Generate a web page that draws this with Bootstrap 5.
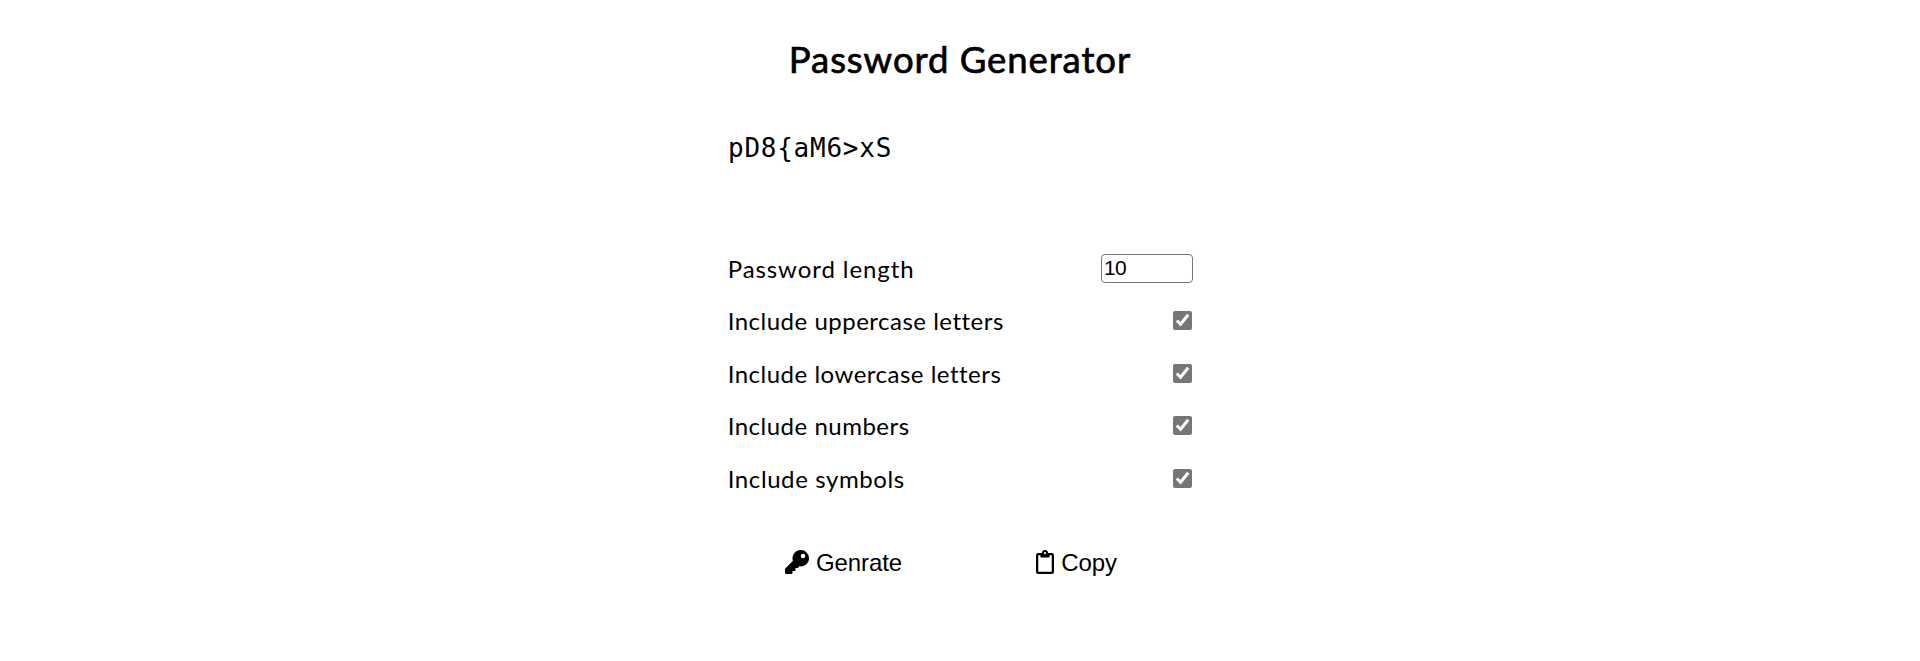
<!DOCTYPE html>
<html lang="en">
<head>
<meta charset="utf-8">
<meta name="viewport" content="width=device-width, initial-scale=1">
<title>Password Generator</title>
<link href="https://cdn.jsdelivr.net/npm/bootstrap@5.3.0/dist/css/bootstrap.min.css" rel="stylesheet">
<style>
body { font-family: Lato, sans-serif; color: #000; background: #fff; }
.generator { width: 466px; padding-top: 35px; }
.title { font-size: 36.5px; line-height: 48px; font-weight: 400; -webkit-text-stroke: .7px #000; letter-spacing: .92px; margin-bottom: 41px; }
.result { font: 26px/48px "DejaVu Sans Mono", monospace; letter-spacing: .75px; height: 118.8px; padding-left: 1px; }
.option { height: 52.5px; font-size: 24px; line-height: 52.5px; letter-spacing: .5px; padding-left: .7px; }
.option-length { letter-spacing: .92px; }
.option-symbols { letter-spacing: .6px; }
.length-box { width: 92px; height: 29px; margin-top: -2px; padding: 0 2px 1px; border: 1px solid #767676; border-radius: 4px; font: 21px/24px "Liberation Sans", sans-serif; letter-spacing: -.6px; color: #000; }
.check { width: 19px; height: 19px; margin: 0 1px 2px 0; accent-color: #767676; }
.actions { margin-top: 42.2px; }
.action { font: 24px/32px "Liberation Sans", sans-serif; letter-spacing: -.1px; background: none; border: 0; padding: 0; color: #000; }
.action svg { margin: 0 7px 2px 0; }
</style>
</head>
<body>
<main class="generator mx-auto">
  <h1 class="title text-center">Password Generator</h1>
  <div class="result">pD8{aM6&gt;xS</div>
  <form>
    <div class="option option-length d-flex justify-content-between align-items-center"><label for="len">Password length</label><input id="len" class="length-box" type="text" value="10"></div>
    <div class="option d-flex justify-content-between align-items-center"><label for="upper">Include uppercase letters</label><input id="upper" class="check" type="checkbox" checked></div>
    <div class="option d-flex justify-content-between align-items-center"><label for="lower">Include lowercase letters</label><input id="lower" class="check" type="checkbox" checked></div>
    <div class="option d-flex justify-content-between align-items-center"><label for="num">Include numbers</label><input id="num" class="check" type="checkbox" checked></div>
    <div class="option option-symbols d-flex justify-content-between align-items-center"><label for="sym">Include symbols</label><input id="sym" class="check" type="checkbox" checked></div>
    <div class="actions row g-0 text-center">
      <div class="col-6"><button type="button" class="action d-inline-flex align-items-center"><svg width="24" height="24" viewBox="0 0 512 512" fill="currentColor"><path d="M512 176c0 97-79 176-176 176-11 0-22-1-33-3l-24 27a24 24 0 0 1-18 8h-37v40a24 24 0 0 1-24 24h-40v40a24 24 0 0 1-24 24H24a24 24 0 0 1-24-24v-78c0-6 3-12 7-17l162-162A176 176 0 1 1 512 176zM336 128a48 48 0 1 0 96 0 48 48 0 0 0-96 0z"/></svg>Genrate</button></div>
      <div class="col-6"><button type="button" class="action d-inline-flex align-items-center"><svg width="18" height="24" viewBox="0 0 384 512" fill="currentColor"><path d="M336 64h-80a64 64 0 0 0-128 0H48a48 48 0 0 0-48 48v352a48 48 0 0 0 48 48h288a48 48 0 0 0 48-48V112a48 48 0 0 0-48-48zM192 40a24 24 0 1 1 0 48 24 24 0 0 1 0-48zm144 418a6 6 0 0 1-6 6H54a6 6 0 0 1-6-6V118a6 6 0 0 1 6-6h42v36a12 12 0 0 0 12 12h168a12 12 0 0 0 12-12v-36h42a6 6 0 0 1 6 6z"/></svg>Copy</button></div>
    </div>
  </form>
</main>
<script src="https://cdn.jsdelivr.net/npm/bootstrap@5.3.0/dist/js/bootstrap.bundle.min.js"></script>
</body>
</html>
